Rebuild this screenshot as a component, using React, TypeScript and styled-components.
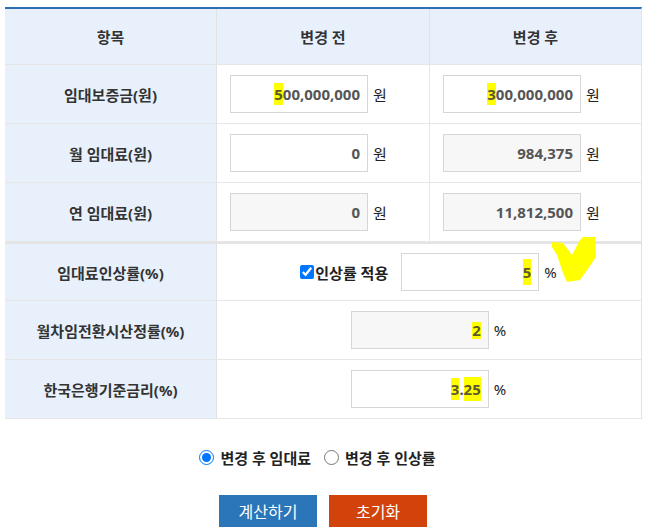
import React from "react";
import styled, { createGlobalStyle } from "styled-components";

const Global = createGlobalStyle`
  html, body { margin: 0; padding: 0; background: #fff; }
  body { font-family: "Noto Sans", "Noto Sans CJK KR", sans-serif; color: #222; }
`;

const Page = styled.div`
  position: relative;
  width: 646px;
  height: 531px;
  padding: 7px 0 0 5px;
  box-sizing: border-box;
`;

const Table = styled.div`
  width: 637px;
  border-top: 2px solid #2d6db4;
  border-right: 1px solid #e2e2e2;
  box-sizing: border-box;
`;

const Row = styled.div<{ $head?: boolean; $thick?: boolean }>`
  display: grid;
  grid-template-columns: 212px 213px 211px;
  height: ${(p) => (p.$head ? 56 : 59)}px;
  box-sizing: border-box;
  border-top: ${(p) => (p.$thick ? "2px solid #e4e4e4" : "none")};
  border-bottom: 1px solid #e6e6e6;
  background: ${(p) => (p.$head ? "#e8f0fc" : "#fff")};
`;

const HeadCell = styled.div`
  display: flex;
  align-items: center;
  justify-content: center;
  font-size: 15px;
  font-weight: 700;
  color: #333;
  border-right: 1px solid #e2e2e2;
  &:last-child { border-right: none; }
`;

const LabelCell = styled.div`
  display: flex;
  align-items: center;
  justify-content: center;
  background: #e8f0fc;
  border-right: 1px solid #e2e2e2;
  font-size: 15px;
  font-weight: 700;
  color: #333;
`;

const ValueCell = styled.div<{ $last?: boolean }>`
  display: flex;
  align-items: center;
  padding-left: 13px;
  border-right: ${(p) => (p.$last ? "none" : "1px solid #e6e6e6")};
`;

const WideCell = styled.div`
  grid-column: 2 / span 2;
  display: flex;
  align-items: center;
  justify-content: center;
  padding-right: 1px;
`;

const Field = styled.div<{ $ro?: boolean }>`
  width: 138px;
  height: 38px;
  box-sizing: border-box;
  border: 1px solid #d6d6d6;
  background: ${(p) => (p.$ro ? "#f7f7f7" : "#fff")};
  display: flex;
  align-items: center;
  justify-content: flex-end;
  padding-right: 7px;
  font-size: 15px;
  font-weight: 700;
  color: #555;
`;

const Mark = styled.span<{ $h?: number }>`
  display: inline-block;
  background: #ffff00;
  line-height: ${(p) => p.$h ?? 22}px;
  color: #5a5a2a;
`;

const Unit = styled.span`
  margin-left: 5px;
  font-size: 15px;
  color: #222;
`;

const CheckLabel = styled.label`
  display: flex;
  align-items: center;
  font-size: 15px;
  font-weight: 700;
  color: #222;
  margin-right: 13px;
  input { margin: 0 1px 0 0; width: 14px; height: 14px; accent-color: #0075ff; }
`;

const Options = styled.div`
  display: flex;
  justify-content: center;
  align-items: center;
  gap: 13px;
  margin-top: 28px;
  padding-right: 16px;
`;

const RadioLabel = styled.label`
  display: flex;
  align-items: center;
  font-size: 15px;
  font-weight: 700;
  color: #222;
  input { margin: 0 6px 0 0; width: 15px; height: 15px; accent-color: #0075ff; }
`;

const Buttons = styled.div`
  display: flex;
  justify-content: center;
  gap: 12px;
  margin-top: 27px;
  padding-right: 5px;
`;

const Button = styled.button<{ $color: string }>`
  width: 98px;
  height: 32px;
  border: none;
  background: ${(p) => p.$color};
  color: #fff;
  font-family: "Noto Sans CJK KR", sans-serif;
  font-size: 16px;
  padding: 0;
`;

const YellowCheck = styled.svg`
  position: absolute;
  left: 548px;
  top: 233px;
`;

export default function App() {
  return (
    <>
      <Global />
      <Page>
        <Table>
          <Row $head>
            <HeadCell>항목</HeadCell>
            <HeadCell>변경 전</HeadCell>
            <HeadCell>변경 후</HeadCell>
          </Row>
          <Row>
            <LabelCell>임대보증금(원)</LabelCell>
            <ValueCell>
              <Field><Mark>5</Mark>00,000,000</Field>
              <Unit>원</Unit>
            </ValueCell>
            <ValueCell $last>
              <Field><Mark>3</Mark>00,000,000</Field>
              <Unit>원</Unit>
            </ValueCell>
          </Row>
          <Row>
            <LabelCell>월 임대료(원)</LabelCell>
            <ValueCell>
              <Field>0</Field>
              <Unit>원</Unit>
            </ValueCell>
            <ValueCell $last>
              <Field $ro>984,375</Field>
              <Unit>원</Unit>
            </ValueCell>
          </Row>
          <Row>
            <LabelCell>연 임대료(원)</LabelCell>
            <ValueCell>
              <Field $ro>0</Field>
              <Unit>원</Unit>
            </ValueCell>
            <ValueCell $last>
              <Field $ro>11,812,500</Field>
              <Unit>원</Unit>
            </ValueCell>
          </Row>
          <Row $thick>
            <LabelCell>임대료인상률(%)</LabelCell>
            <WideCell>
              <CheckLabel>
                <input type="checkbox" defaultChecked />
                인상률 적용
              </CheckLabel>
              <Field><Mark $h={26}>5</Mark></Field>
              <Unit>%</Unit>
            </WideCell>
          </Row>
          <Row>
            <LabelCell>월차임전환시산정률(%)</LabelCell>
            <WideCell>
              <Field $ro><Mark $h={17}>2</Mark></Field>
              <Unit>%</Unit>
            </WideCell>
          </Row>
          <Row>
            <LabelCell>한국은행기준금리(%)</LabelCell>
            <WideCell>
              <Field><Mark>3</Mark>.<Mark $h={24}>25</Mark></Field>
              <Unit>%</Unit>
            </WideCell>
          </Row>
        </Table>
        <Options>
          <RadioLabel>
            <input type="radio" name="mode" defaultChecked />
            변경 후 임대료
          </RadioLabel>
          <RadioLabel>
            <input type="radio" name="mode" />
            변경 후 인상률
          </RadioLabel>
        </Options>
        <Buttons>
          <Button $color="#2b75b9">계산하기</Button>
          <Button $color="#d1430b">초기화</Button>
        </Buttons>
        <YellowCheck width="52" height="54" viewBox="0 0 52 54">
          <path
            d="M4 9 L15 10 L24 22 L32 7 L35 4 L47 4 L48 24 L44 30 L32 47 L19 49 L15 40 L9 22 L4 14 Z"
            fill="#ffff00"
          />
        </YellowCheck>
      </Page>
    </>
  );
}
